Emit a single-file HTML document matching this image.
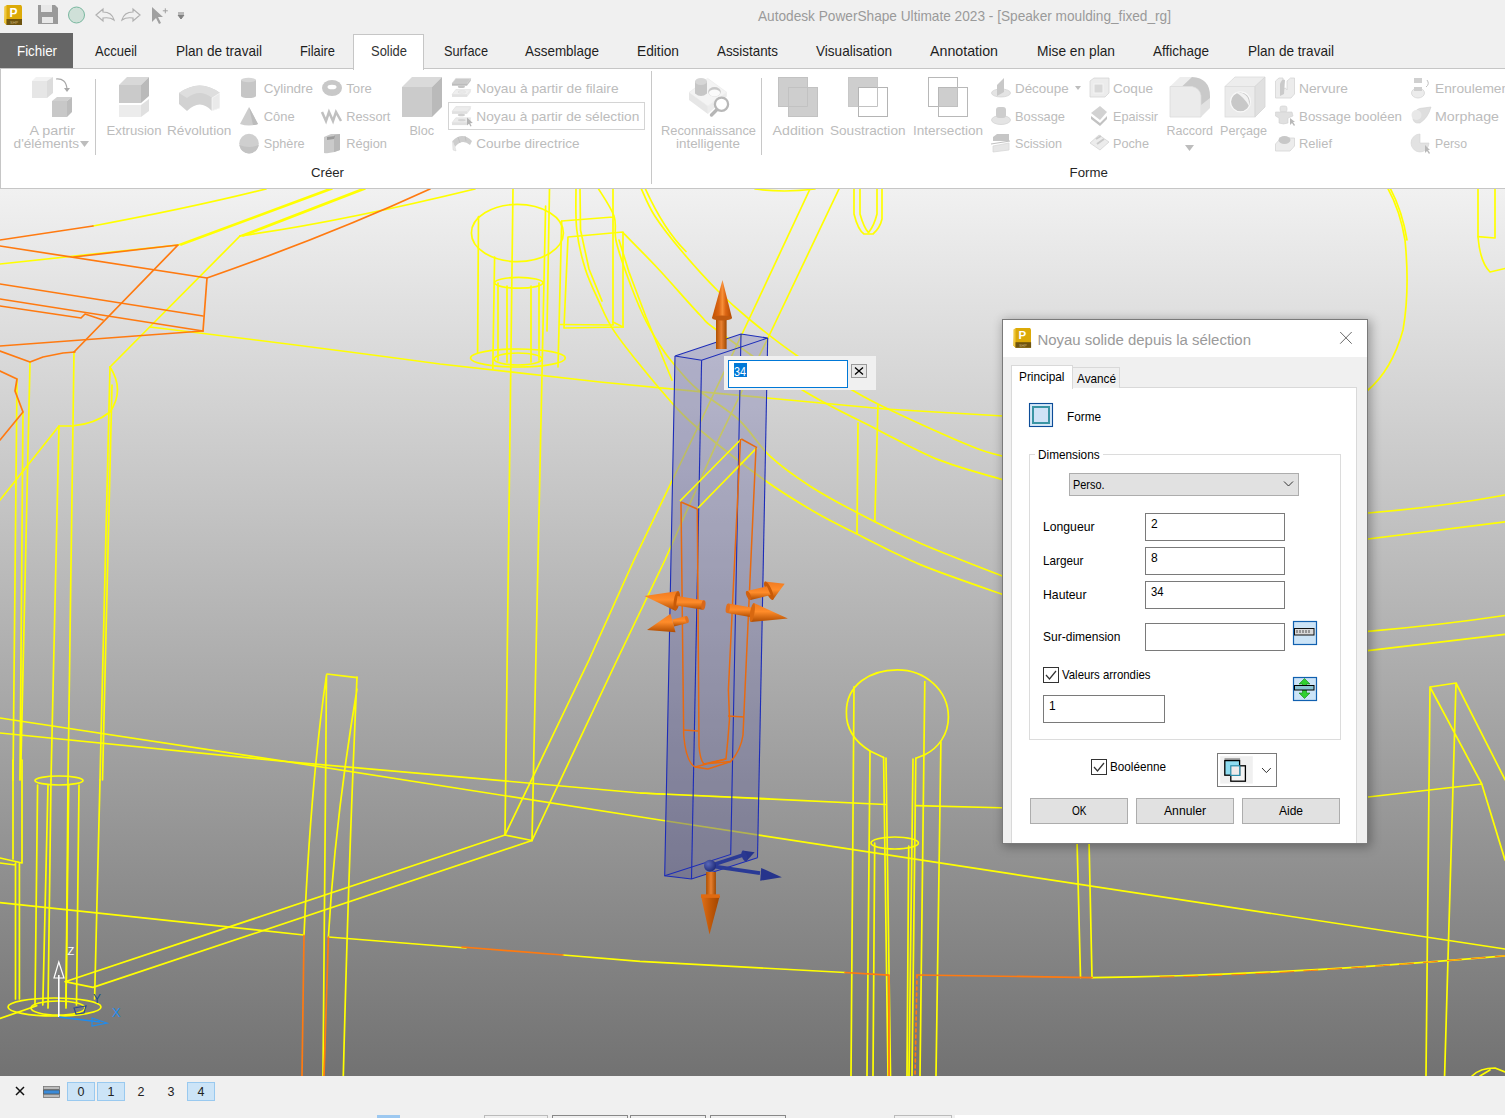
<!DOCTYPE html>
<html><head><meta charset="utf-8">
<style>
*{margin:0;padding:0;box-sizing:border-box}
html,body{width:1505px;height:1118px;overflow:hidden;background:#f0f0f0;font-family:"Liberation Sans",sans-serif;position:relative}
.a{position:absolute;white-space:nowrap}
svg text{font-family:"Liberation Sans",sans-serif}
</style></head><body>
<div class="a" style="left:0;top:33px;width:73px;height:35px;background:#666"></div>
<div class="a" style="left:0;top:68px;width:1510px;height:121px;background:#fff;border:1px solid #c6c6c6"></div>
<div class="a" style="left:353px;top:34px;width:71px;height:36px;background:#fff;border:1px solid #c6c6c6;border-bottom:none"></div>
<div class="a" style="left:0;top:189px;width:1505px;height:887px;background:linear-gradient(#f1f1f1,#727272)"></div>
<svg class="a" style="left:0;top:189px" width="1505" height="887" viewBox="0 189 1505 887">
<g fill="none" stroke-linejoin="round" stroke-linecap="round">
<!-- ===== yellow wireframe ===== -->
<defs><mask id="bm" maskUnits="userSpaceOnUse" x="0" y="189" width="1505" height="887"><rect x="0" y="189" width="1505" height="887" fill="#fff"/><path d="M675 356 L741 334 L767.7 338 L757.5 857.8 L691.5 879 L664.7 875.7 Z" fill="#9a9a9a"/></mask></defs>
<g stroke="#ffff00" stroke-width="1.7" mask="url(#bm)">
<!-- region 1 top-left -->
<path d="M93 226 Q190 208 266 189"/>
<path d="M0 264 L178 245"/>
<path d="M178 245 L329 189"/><path d="M181 245 L332 189"/>
<path d="M240 236 L362 189"/><path d="M243 236 L365 189"/>
<path d="M240 236 Q340 222 475 189"/>
<path d="M240 236 L110 367"/>
<path d="M150 327 Q300 345 440 364 L600 382 L699 391.6 L821 403 L885 409 L1003 416"/>
<path d="M30 362 L21 760"/><path d="M74 352 L68 780"/><path d="M110 367 L100 780"/><path d="M112 385 L102.5 780"/>
<path d="M110 367 Q125 390 110 412 Q95 424 72 426 L59 426 L0 500"/>
<path d="M59 426 L51 780"/>
<path d="M17 379 L13 780"/><path d="M23 412 L20 780"/>
<!-- cylinder near 517 -->
<ellipse cx="517.4" cy="233" rx="46" ry="28.6"/>
<path d="M478.5 216.6 L477.6 352.6"/>
<path d="M513 188 L505 835"/>
<path d="M545.6 206 L532 840.5"/>
<path d="M549.5 188 L547 331"/>
<path d="M494.6 257 L492.8 368.7"/>
<path d="M561.7 221 L558 367"/>
<ellipse cx="518.8" cy="282.8" rx="24.2" ry="5.4"/>
<path d="M498 283 V360 M507 286 V362 M531 286 V362 M539 283 V360"/>
<ellipse cx="517.9" cy="358" rx="47.4" ry="9"/>
<ellipse cx="518" cy="359" rx="24" ry="6"/>
<!-- boxes -->
<path d="M561.7 221 L613 217 M613 188 L613 325 L560 324.5"/>
<path d="M568 237 L623 232 L623 327 L564 328 L568 237"/>
<path d="M613 322 L623 327"/>
<path d="M576 188 C576.1 195.0 575.2 216.5 576.8 230 C578.3 243.5 581.6 257.1 585.3 269 C589.0 280.9 594.4 291.5 598.9 301.4 C603.4 311.3 606.0 318.4 612.5 328.6 C619.0 338.8 627.5 349.5 638 362.5 C648.5 375.5 665.1 395.4 675.4 406.7 C685.7 417.9 685.4 417.9 700 430 C714.6 442.1 744.2 465.5 763 479 C781.8 492.5 797.5 501.9 813 511 C828.5 520.1 838.0 524.6 855.9 533.5 C873.8 542.4 894.6 554.0 920.3 564.6 C946.0 575.2 995.0 591.6 1010 597"/>
<path d="M580 188 L580.5 230 L589 269 L602 301"/>
<path d="M619 240 L629 272 L646 317 L672 380"/>
<path d="M641 188 C643.2 192.6 647.7 204.9 654.5 215.5 C661.3 226.1 671.4 238.9 682 251.5 C692.6 264.1 706.8 279.8 718 291 C729.2 302.2 736.0 308.3 749 319 C762.0 329.7 778.9 343.2 796 355 C813.1 366.8 836.6 380.9 851.6 389.7 C866.6 398.5 866.0 398.5 886 408 C906.0 417.5 952.3 438.5 971.8 446.5 C991.3 454.5 997.8 454.6 1003 456.2"/>
<path d="M645 188 Q664 230 686 251.5"/>
<path d="M623 232.6 C628.9 238.7 645.6 255.3 658.4 269 C671.2 282.7 690.1 304.7 700 315 C709.9 325.3 701.0 318.6 718 331 C735.0 343.4 775.5 373.3 802 389.7 C828.5 406.1 854.4 417.8 877 429.4 C899.6 441.0 916.5 451.0 937.5 459.4 C958.5 467.8 992.1 476.4 1003 479.8"/>
<path d="M598 188 C600.7 192.7 611.0 207.3 614 216 C617.0 224.7 613.9 230.6 615.9 240 C617.9 249.4 621.5 260.0 626 272.5 C630.5 285.0 637.3 302.8 643 315 C648.7 327.2 654.6 337.0 660 345.5 C665.4 354.0 669.2 358.8 675.4 366 C681.6 373.2 686.5 380.1 697 389 C707.5 397.9 726.3 408.3 738.5 419.5 C750.7 430.7 758.3 445.2 770 456.2 C781.7 467.1 794.3 475.9 808.6 485.2 C822.9 494.5 837.3 502.3 855.9 512 C874.5 521.7 894.6 532.0 920.3 543.2 C946.0 554.4 995.0 573.0 1010 579"/>
<path d="M810 189 L743 332 L698 427 L670.5 484 L634 560 L589 660 L505 835"/>
<path d="M839 189 L768 338 L743 389 L715.4 446 L665 560 L617 660 L532 840.5"/>
<path d="M755 189 Q784 193 815 189"/>
<path d="M854 189 V214 Q858 230 864 234 L873 234 Q880 228 882 219 V189"/>
<path d="M860 189 V214 Q864 228 868.5 232.6 Q874 226 877 214 V189"/>
<path d="M858 423 L857 533.5"/><path d="M878 404.7 L874.8 521.7"/>
<!-- right top -->
<path d="M1387.6 188 Q1400 210 1405 240 Q1410 290 1403 330 Q1392 370 1367 391"/>
<path d="M1390 188 Q1402 210 1407 240"/>
<path d="M1478 188 L1478 236.7 Q1480 262 1490 272 L1505 268.5"/>
<path d="M1495 188 L1495 238 L1478 236.7"/>
<path d="M1368 513 Q1441 507 1505 495"/><path d="M1368 539 Q1441 530 1505 521.8"/>
<path d="M1368 631.4 Q1441 625 1505 615.5"/><path d="M1368 650.7 Q1441 642 1505 634.4"/>
<path d="M1430 687 L1456 683 M1430 687 L1426 1076 M1456 683 L1444.6 1076 M1430 687 L1481.8 784 L1505 860 M1456 683 L1505 779.6 M1368 797 L1481.8 784"/>
<!-- left mid / bottom -->
<path d="M0 733 L280 761 L640 793 L885.4 804.5 M915.8 805.7 L1010 808"/>
<path d="M0 718 L280 760.5 L660 820 L1010 873.7 L1505 949"/>
<path d="M327 674 L357 677.7"/>
<path d="M326.5 675 Q311 780 304 935.4 M326.5 675 L323 1076 M357 689 Q335 820 328.4 937 M357 677 Q349 850 343.3 1076"/>
<path d="M505 835 L532 840.5"/>
<path d="M505 835 L65 981.7 L93 987.4 L532 840.5"/>
<path d="M13 760 V859 M22 760 V863 M0 858 L22 863 M0 863 L15.5 865 M15.5 863 V999 M19.4 863 V999"/>
<path d="M51 780 L48 1008 M68 780 L66 1008 M100 780 L94.6 999"/>
<ellipse cx="59" cy="780.5" rx="24" ry="4.5"/>
<path d="M37.6 785 L35 1005 M48 785 L42.8 1005 M68.7 785 L66 1005 M79 785 L76.5 1005"/>
<ellipse cx="54.5" cy="1007" rx="46.5" ry="9"/>
<ellipse cx="58" cy="1008" rx="27" ry="7"/>
<path d="M0 1018.5 L36.7 1005.7"/>
<path d="M0 902.7 L303.7 935"/>
<path d="M328.4 937 L466 948 M563 955 L640 961.4 L845 972.5 M1092 977.6 Q1268 976 1505 955.8"/>
<!-- keyhole post -->
<path d="M883.6 757.4 L870 751 C852 740 846 725 846.4 711.8 C846.4 685 870 669.8 897.4 669.8 C925 669.8 948.4 690 948.4 717 C948.4 735 938 748 924.8 754.8 L915.8 758.3"/>
<path d="M854 686.8 L851 1076 M924.8 681.5 L920 1076 M870 751 L867 1076 M940.9 742 L936 1076"/>
<path d="M883.6 757.4 L888 1076 M886 758 L890.5 1076 M915.8 758.3 L912 1076 M913 759 L909 1076"/>
<ellipse cx="894.7" cy="843" rx="23.7" ry="6"/>
<path d="M874.7 843 L873 1076 M908.7 846 L907 1076"/>
<path d="M1077 840 L1080.5 977.6 M1089 840 L1092 977.6"/>
<path d="M1472 1076 Q1480 1068 1495 1068 L1505 1072 M1480 1076 L1490 1070"/>
</g>
<!-- ===== orange wireframe ===== -->
<g stroke="#ff7a10" stroke-width="1.7">
<path d="M0 240 L93 226"/>
<path d="M0 246 L207 278 Q330 235 430 189"/>
<path d="M74 257 L178 245 L74 352"/>
<path d="M207 278 L203 331"/>
<path d="M0 284 L203 316"/>
<path d="M0 299 L203 331"/>
<path d="M0 306 L81 318 L85 314 L103 320"/>
<path d="M0 346 L203 331"/>
<path d="M0 351 L30 362 L43 357 L63 353 L75 352"/>
<path d="M0 371 L17 379 L15 391 L23 412 L0 440"/>
<path d="M304 935.4 L302 1076 M328.4 937 L324 1076"/>
<path d="M462 947 L563 955"/>
<path d="M845 972.5 L889 975.2 L889 1076 M917 975 L1092 977.6"/>
<path d="M917 975 L915 1076" stroke-dasharray="3 3"/>
<path d="M1160 977 Q1268 976 1505 955.8" stroke-dasharray="14 10" stroke-width="1"/>
</g>
</g>

<defs>
<linearGradient id="cone" x1="0" y1="0" x2="1" y2="0">
<stop offset="0" stop-color="#c05000"/><stop offset="0.35" stop-color="#dc6614"/><stop offset="0.52" stop-color="#f89038"/><stop offset="0.68" stop-color="#dc6614"/><stop offset="1" stop-color="#b04800"/>
</linearGradient>
<linearGradient id="shaft" x1="0" y1="0" x2="1" y2="0">
<stop offset="0" stop-color="#b05000"/><stop offset="0.5" stop-color="#e88030"/><stop offset="1" stop-color="#a04800"/>
</linearGradient>
<linearGradient id="coneh" x1="0" y1="0" x2="0" y2="1">
<stop offset="0" stop-color="#f07a20"/><stop offset="0.45" stop-color="#ff8c2a"/><stop offset="1" stop-color="#b04c00"/>
</linearGradient>
<linearGradient id="coned" x1="0" y1="0" x2="1" y2="0">
<stop offset="0" stop-color="#e07018"/><stop offset="0.45" stop-color="#c45a08"/><stop offset="1" stop-color="#a04400"/>
</linearGradient>
<radialGradient id="ball" cx="0.35" cy="0.35" r="0.7">
<stop offset="0" stop-color="#5a68b8"/><stop offset="1" stop-color="#1e2a78"/>
</radialGradient>
</defs>
<!-- translucent box faces -->
<g fill="#3a3aa0" fill-opacity="0.22" stroke="none">
<path d="M675 356 L741 334 L767.7 338 L757.5 857.8 L691.5 879 L664.7 875.7 Z"/>
</g>
<g fill="#3a3a90" fill-opacity="0.05" stroke="none">
<path d="M675 356 L701.6 360.3 L691.5 879 L664.7 875.7 Z"/>
</g>
<path d="M640 793 L770 798.9" stroke="#ffff00" stroke-width="1.7" fill="none"/>
<g fill="none" stroke="#1c2cb8" stroke-width="1.1">
<path d="M675 356 L741 334 L767.7 338 L701.6 360.3 Z"/>
<path d="M675 356 L664.7 875.7 L691.5 879 L757.5 857.8"/>
<path d="M701.6 360.3 L691.5 879"/>
<path d="M741 334 L730.7 854.4 L664.7 875.7"/>
<path d="M767.7 338 L757.5 857.8"/>
</g>
<path d="M680 501 L741.3 439 M698 508 L757 447.7" stroke="#ffff00" stroke-width="1.7" fill="none"/>
<!-- orange U inside -->
<g fill="none" stroke="#e86a10" stroke-width="1.5">
<path d="M681 502 L683.7 735 Q686 762 695 767 L708 769 L730.7 761.6 Q741 750 743 735 L745 690 L756 447.7"/>
<path d="M697.3 509 L699 746 Q700 760 704 764 L726 759 Q728 740 729.5 719 L728.4 690 L740.5 439"/>
<path d="M681 502 L697.3 509 M741.3 439 L757 447.7"/>
<path d="M683.7 730 L698 731 M728 716 L744 717"/>
<path d="M695 767 L726 759 M704 764 L730.7 761.6"/>
</g>
<!-- up arrow -->
<rect x="716" y="318" width="10.6" height="31" fill="url(#shaft)"/>
<path d="M722.5 280 L732 318 L712 318 Z" fill="url(#cone)"/>
<ellipse cx="722" cy="318" rx="10" ry="2.5" fill="#c05a10"/>
<!-- down arrow -->
<rect x="706.1" y="872" width="9.8" height="24.5" fill="url(#shaft)"/>
<path d="M701 896 L719.7 896 L709.5 934.6 Z" fill="url(#coned)"/>
<rect x="701" y="894.3" width="18.7" height="3.6" fill="#e06a10"/>
<!-- left arrows -->
<g>
<path d="M644.4 596 L678.3 590.9 L675.3 610.7 Z" fill="url(#coneh)"/>
<ellipse cx="676.8" cy="600.8" rx="3" ry="10" transform="rotate(8.5 676.8 600.8)" fill="#c85a08"/>
<path d="M677.5 596.1 L704.1 600.4 L702.7 609.8 L676.1 605.5 Z" fill="url(#coneh)"/>
<ellipse cx="703.4" cy="605.1" rx="2" ry="4.8" transform="rotate(8.5 703.4 605.1)" fill="#d8681a"/>
<path d="M672.1 619.6 L686.1 616.1 L687.9 622.9 L673.9 626.4 Z" fill="url(#coneh)"/>
<ellipse cx="687" cy="619.5" rx="1.6" ry="3.5" transform="rotate(-15 687 619.5)" fill="#e07020"/>
<path d="M647 630 L670.5 613.8 L675.5 632.2 Z" fill="url(#coneh)"/>
</g>
<!-- right arrows -->
<g>
<path d="M728.6 603.6 L753.1 607.8 L751.5 617.2 L727 613 Z" fill="url(#coneh)"/>
<ellipse cx="727.8" cy="608.3" rx="2" ry="4.8" transform="rotate(9.4 727.8 608.3)" fill="#e07020"/>
<path d="M787.9 618.4 L753.9 603 L750.7 622 Z" fill="url(#coneh)"/>
<ellipse cx="752.3" cy="612.5" rx="2.2" ry="9.6" transform="rotate(9.4 752.3 612.5)" fill="#d86810"/>
<path d="M784.7 583.8 L764.8 581.5 L772.8 599.9 Z" fill="url(#coneh)"/>
<ellipse cx="768.8" cy="590.7" rx="3" ry="10" transform="rotate(-23.4 768.8 590.7)" fill="#c85a08"/>
<path d="M766.9 586.3 L746.7 591.1 L750.5 599.9 L770.7 595.1 Z" fill="url(#coneh)"/>
<ellipse cx="748.6" cy="595.5" rx="2" ry="4.8" transform="rotate(-23.4 748.6 595.5)" fill="#d06010"/>
</g>
<!-- blue triad -->
<path d="M710 865.8 L760 873.2" stroke="#2a3a96" stroke-width="3.8"/>
<path d="M761.2 867.9 L781.8 877.3 L760.2 880.7 Z" fill="#26348c"/>
<path d="M710 865.8 L743 855" stroke="#2a3a96" stroke-width="3.6"/>
<path d="M742.5 850.5 L754.6 852.2 L746.2 861.5 Z" fill="#26348c"/>
<ellipse cx="744.4" cy="856" rx="2.6" ry="5.5" transform="rotate(-18 744.4 856)" fill="#2a3890"/>
<circle cx="710" cy="865.8" r="6" fill="url(#ball)"/>
<!-- axis triad bottom-left -->
<path d="M58.8 1017 V975" stroke="#fff" stroke-width="1.6"/>
<path d="M58.8 962 L54 978 L64 978 Z" fill="none" stroke="#fff" stroke-width="1.2"/>
<text x="67.5" y="955" font-family="Liberation Sans" font-size="11" fill="#fff">Z</text>
<path d="M59 1017 L100 1022" stroke="#1e8cf0" stroke-width="1.6"/>
<path d="M92 1018 L107 1023 L92 1026 Z" fill="none" stroke="#1e8cf0" stroke-width="1.2"/>
<text x="112" y="1017" font-family="Liberation Sans" font-size="13" fill="#1e8cf0">X</text>
<text x="93" y="1003" font-family="Liberation Sans" font-size="12" fill="#1a4e8c">Y</text>
<path d="M74 1008 L86 1006 L84 1013 L76 1014 Z" fill="none" stroke="#2a4a90" stroke-width="1.2"/>

</svg>
<!-- quick access toolbar -->
<svg class="a" style="left:0;top:0" width="200" height="33">
<path d="M5.5 6 L7 5 L21 5 L22 6.5 L22 25 L6.5 25 L4.2 22.5 Z" fill="#dcaa08"/>
<path d="M4.2 6.5 L6.5 5.5 L6.5 25 L4.2 22.5 Z" fill="#f0c840"/>
<rect x="6.5" y="19" width="15.5" height="6" fill="#6e5410"/>
<text x="9.6" y="16.5" font-family="Liberation Sans" font-weight="bold" font-size="12" fill="#fff">P</text>
<text x="10" y="23.8" font-family="Liberation Sans" font-size="4" fill="#c8b070">SHP</text>
<path d="M38 5 H55 L58 8 V24 H38 Z" fill="#9a9a9a"/>
<rect x="41" y="5" width="11" height="7" fill="#e8e8e8"/>
<rect x="42" y="17" width="11" height="6" fill="#e8e8e8"/>
<circle cx="76.5" cy="15" r="8" fill="#cfe0d8" stroke="#7ab8a0" stroke-width="1"/>
<path d="M96 15 L103 9 V12 Q112 12 114 20 Q110 17 103 18 V21 Z" fill="none" stroke="#b0b0b0" stroke-width="1.2"/>
<path d="M140 15 L133 9 V12 Q124 12 122 20 Q126 17 133 18 V21 Z" fill="none" stroke="#b0b0b0" stroke-width="1.2"/>
<path d="M152 7 L152 22 L156 18 L159 24 L161 23 L158 17 L163 17 Z" fill="#a0a0a0"/>
<path d="M162.8 10.8 H167.8 M165.3 8.3 V13.3" stroke="#a0a0a0" stroke-width="1"/>
<path d="M178 13 H184 M178 15 L181 19 L184 15 Z" stroke="#808080" fill="#808080" stroke-width="1"/>
</svg>

<svg class="a" style="left:0;top:0" width="1505" height="189">
<g stroke="none">
<!-- separators -->
<rect x="95" y="79" width="1" height="76" fill="#c8c8c8"/>
<rect x="651" y="71" width="1" height="113" fill="#c8c8c8"/>
<rect x="761" y="78" width="1" height="77" fill="#c8c8c8"/>
<!-- A partir -->
<path d="M32 81 L36 77 L53 77 L49 81 Z" fill="#f2f2f2"/>
<rect x="32" y="81" width="15" height="17" fill="#e6e6e6"/>
<path d="M47 81 L53 77 L53 93 L47 98 Z" fill="#dcdcdc"/>
<path d="M56 79 Q66 78 67 89" fill="none" stroke="#a8a8a8" stroke-width="1.2"/>
<path d="M64 88 L70 88 L67 92 Z" fill="#a8a8a8"/>
<path d="M52 101 L57 97 L72 97 L67 101 Z" fill="#d0d0d0"/>
<rect x="52" y="101" width="15" height="16" fill="#c8c8c8"/>
<path d="M67 101 L72 97 L72 112 L67 117 Z" fill="#bcbcbc"/>
<path d="M80 141 L89 141 L84.5 147 Z" fill="#bdbdbd"/>
<!-- Extrusion -->
<path d="M119 85 L127 77 L149 77 L141 85 Z" fill="#d8d8d8"/>
<rect x="119" y="85" width="22" height="18" fill="#cacaca"/>
<path d="M141 85 L149 77 L149 96 L141 103 Z" fill="#bababa"/>
<rect x="119" y="105" width="22" height="12" fill="#ececec"/>
<path d="M141 105 L149 99 L149 111 L141 117 Z" fill="#e0e0e0"/>
<!-- Revolution -->
<path d="M179 93 Q200 78 220 93 L220 108 L212 111 Q200 98 187 111 L179 104 Z" fill="#d2d2d2"/>
<path d="M179 93 Q200 78 220 93 L212 98 Q200 88 187 98 Z" fill="#dedede"/>
<path d="M212 98 L220 93 L220 108 L212 111 Z" fill="#eaeaea" stroke="#fff" stroke-width="0.6"/>
<!-- cylinder cone sphere -->
<rect x="241" y="80" width="15" height="16" fill="#c6c6c6"/>
<ellipse cx="248.5" cy="80" rx="7.5" ry="2.2" fill="#d6d6d6"/>
<ellipse cx="248.5" cy="96" rx="7.5" ry="2" fill="#c6c6c6"/>
<path d="M249 107 L240 124 Q249 127 258 124 Z" fill="#cdcdcd"/>
<path d="M249 107 L253 125 Q256 125 258 124 Z" fill="#bcbcbc"/>
<circle cx="249" cy="143.6" r="9.8" fill="#cfcfcf"/>
<path d="M239.3 145 Q249 149 258.8 145 Q257 153 249 153.5 Q241 153 239.3 145 Z" fill="#c3c3c3"/>
<!-- torus spring region -->
<ellipse cx="332" cy="88" rx="10" ry="8" fill="#c8c8c8"/>
<ellipse cx="332" cy="87" rx="4.5" ry="2.3" fill="#fff"/>
<path d="M322 112 L326 121 L329 112 L333 121 L336 112 L341 121" fill="none" stroke="#c0c0c0" stroke-width="2.5"/>
<path d="M324 137 L331 134 L340 134 L340 150 Q332 154 324 153 Z" fill="#cacaca"/>
<path d="M334 135 L340 134 L340 150 L334 152 Z" fill="#b8b8b8"/>
<path d="M327 137 L335 136 L334 139 L327 140 Z" fill="#9a9a9a"/>
<!-- Bloc -->
<path d="M402 87 L412 77 L442 77 L432 87 Z" fill="#dadada"/>
<rect x="402" y="87" width="30" height="30" fill="#cbcbcb"/>
<path d="M432 87 L442 77 L442 107 L432 117 Z" fill="#bababa"/>
<!-- noyau icons -->
<path d="M452 83.3 L455.8 78.39999999999999 L470.8 78.39999999999999 L467 83.3 Z" fill="#cacaca" stroke="#d8d8d8" stroke-width="0.5"/>
<rect x="452" y="83.3" width="15" height="2.4" fill="#bcbcbc"/>
<path d="M467 83.3 L470.8 78.39999999999999 L470.8 80.8 L467 85.7 Z" fill="#c4c4c4"/>
<ellipse cx="461.4" cy="86.8" rx="3.6" ry="1.3" fill="#c4c4c4"/>
<path d="M452 94.5 L455.8 89.6 L470.8 89.6 L467 94.5 Z" fill="#efefef" stroke="#d8d8d8" stroke-width="0.5"/>
<rect x="452" y="94.5" width="15" height="2.4" fill="#e2e2e2"/>
<path d="M467 94.5 L470.8 89.6 L470.8 92.0 L467 96.9 Z" fill="#e8e8e8"/>
<ellipse cx="461.8" cy="92" rx="3.8" ry="1.1" fill="none" stroke="#d8d8d8" stroke-width="0.6"/>
<path d="M452 111.5 L455.8 106.6 L470.8 106.6 L467 111.5 Z" fill="#ececec" stroke="#d8d8d8" stroke-width="0.5"/>
<rect x="452" y="111.5" width="15" height="2.4" fill="#e0e0e0"/>
<path d="M467 111.5 L470.8 106.6 L470.8 109.0 L467 113.9 Z" fill="#e6e6e6"/>
<ellipse cx="461.4" cy="115" rx="3.6" ry="1.3" fill="#d0d0d0"/>
<path d="M452 122.7 L455.8 117.8 L470.8 117.8 L467 122.7 Z" fill="#ebebeb" stroke="#d8d8d8" stroke-width="0.5"/>
<rect x="452" y="122.7" width="15" height="2.4" fill="#e0e0e0"/>
<path d="M467 122.7 L470.8 117.8 L470.8 120.2 L467 125.10000000000001 Z" fill="#e6e6e6"/>
<ellipse cx="461.8" cy="120.2" rx="3.8" ry="1.1" fill="#d4d4d4"/>
<path d="M467 117.5 L467 125.5 L469 123.8 L470.5 126.5 L471.6 126 L470.2 123.2 L472.8 123 Z" fill="#b4b4b4"/>
<rect x="448.5" y="102.5" width="196" height="27" fill="none" stroke="#d4d4d4" stroke-width="1"/>
<path d="M452.5 141 Q462 131 472 141 L470 145 Q462 138 455 147 Z" fill="#cdcdcd"/>
<path d="M452.5 141 L455 147 L456 151 L453 150 Z" fill="#e8e8e8" stroke="#d6d6d6" stroke-width="0.5"/>
<path d="M458 137 L460 143 M465 136 L466 141" stroke="#bcbcbc" stroke-width="0.7"/>
<!-- Reconnaissance -->
<path d="M689 92.6 L707.6 78.3 L726.8 92.3 L707.9 106.2 Z" fill="#f4f4f4" stroke="#e6e6e6" stroke-width="0.5"/>
<path d="M689 92.6 L707.9 106.2 L707.9 113.9 L689 99.9 Z" fill="#e6e6e6"/>
<path d="M707.9 106.2 L726.8 92.3 L726.8 96.6 L707.9 113.9 Z" fill="#ececec"/>
<path d="M695 81 V93.5 Q701 98.5 707 93.5 V81 Z" fill="#c6c6c6"/>
<ellipse cx="701" cy="81.5" rx="6" ry="3.5" fill="#d6d6d6"/>
<ellipse cx="714.5" cy="91.8" rx="6.3" ry="4.8" fill="#c8c8c8"/>
<ellipse cx="714.5" cy="93" rx="5.6" ry="3.4" fill="#fafafa"/>
<path d="M711.5 115 L717.5 109" stroke="#b6b6b6" stroke-width="3.4" stroke-linecap="round"/>
<circle cx="721.5" cy="104.2" r="6.6" fill="#fff" stroke="#b8b8b8" stroke-width="2.3"/>
<!-- Addition Soustraction Intersection -->
<rect x="778.5" y="77.5" width="29" height="29" fill="#cecece" stroke="#c2c2c2" stroke-width="1"/>
<rect x="788.5" y="87.5" width="29" height="29" fill="#cecece" stroke="#c2c2c2" stroke-width="1"/>
<path d="M788.5 106.5 H807.5 V87.5" fill="none" stroke="#c2c2c2" stroke-width="1"/>
<rect x="848.5" y="77.5" width="29" height="29" fill="#cecece" stroke="#c8c8c8" stroke-width="1"/>
<rect x="858.5" y="87.5" width="29" height="29" fill="#fff" stroke="#b4b4b4" stroke-width="1"/>
<path d="M858.5 106.5 H877.5 V87.5" fill="none" stroke="#c2c2c2" stroke-width="1"/>
<rect x="928.5" y="77.5" width="29" height="29" fill="none" stroke="#b8b8b8" stroke-width="1"/>
<rect x="938.5" y="87.5" width="19" height="19" fill="#cecece"/>
<rect x="938.5" y="87.5" width="29" height="29" fill="none" stroke="#b8b8b8" stroke-width="1"/>
<path d="M938.5 106.5 H957.5 V87.5" fill="none" stroke="#c0c0c0" stroke-width="1"/>
<!-- small forme icons -->
<ellipse cx="1001" cy="93" rx="9.5" ry="4" fill="#e4e4e4" stroke="#d4d4d4" stroke-width="0.8"/>
<path d="M997 85 L1004 78 L1004 92 L997 96 Z" fill="#c8c8c8"/>
<path d="M1075 86 L1081 86 L1078 90 Z" fill="#bdbdbd"/>
<ellipse cx="1001" cy="120" rx="9.5" ry="4.5" fill="#e4e4e4" stroke="#d4d4d4" stroke-width="0.8"/>
<rect x="996" y="107" width="10" height="11" rx="3" fill="#cdcdcd"/>
<path d="M993 137 L997 134 L1009 134 L1009 141 L993 141 Z" fill="#c6c6c6"/>
<path d="M991 144 L1010 141" stroke="#c0c0c0" stroke-width="1"/>
<path d="M993 146 L1009 143 L1009 150 L993 152 Z" fill="#e6e6e6" stroke="#d8d8d8" stroke-width="0.8"/>
<path d="M1090 81 L1094 78 L1109 78 L1109 93 L1105 97 L1090 97 Z" fill="#ececec" stroke="#d6d6d6" stroke-width="0.8"/>
<rect x="1094" y="84" width="9" height="9" fill="#d8d8d8" stroke="#f4f4f4" stroke-width="1"/>
<path d="M1091 113 L1100 106 L1107 112 L1100 120 Z" fill="#d2d2d2"/>
<path d="M1091 116 L1100 123 L1107 116 L1107 119 L1100 126 L1091 119 Z" fill="#c2c2c2"/>
<path d="M1090 143 L1099 135 L1109 142 L1100 150 Z" fill="#ececec" stroke="#d4d4d4" stroke-width="0.8"/>
<path d="M1096 139 L1101 136 M1097 144 L1104 139" stroke="#cacaca" stroke-width="2"/>
<!-- Raccord Percage -->
<path d="M1170 86.5 L1180 77 L1192 77 L1201 86.5 Z" fill="#ededed"/>
<path d="M1192 77 Q1210 78 1210 96 L1210 105 L1201 113 L1201 96 Q1199 88 1192 86.5 L1182 86.5 Z" fill="#c9c9c9"/>
<path d="M1170 86.5 L1192 86.5 Q1200 88 1201 96 L1201 117 L1170 117 Z" fill="#ebebeb" stroke="#dadada" stroke-width="0.8"/>
<path d="M1201 105 L1210 98 L1210 108 L1201 117 Z" fill="#e2e2e2"/>
<path d="M1185 145 L1194 145 L1189.5 151 Z" fill="#bdbdbd"/>
<path d="M1225 86.5 L1235 77 L1265 77 L1255 86.5 Z" fill="#ededed" stroke="#dcdcdc" stroke-width="0.8"/>
<rect x="1225" y="86.5" width="30" height="30.5" fill="#ebebeb" stroke="#dcdcdc" stroke-width="0.8"/>
<path d="M1255 86.5 L1265 77 L1265 107 L1255 117 Z" fill="#e0e0e0" stroke="#d6d6d6" stroke-width="0.8"/>
<circle cx="1240.5" cy="101.8" r="10" fill="#c8c8c8" stroke="#f8f8f8" stroke-width="1.2"/>
<path d="M1236 92.5 Q1250 92 1249 106 Q1244 97 1236 92.5 Z" fill="#f2f2f2"/>
<!-- Nervure etc -->
<path d="M1275.5 81 L1279 78 L1283 78 L1283 90 Q1285 86 1287 90 L1287 81 L1290.5 78 L1294.5 78 L1294.5 94 L1291 98 L1275.5 98 Z" fill="#ececec" stroke="#d6d6d6" stroke-width="0.8"/>
<path d="M1280 96 L1280 84 Q1282 78 1285 80 L1284 94 Z" fill="#cacaca"/>
<rect x="1280" y="106" width="7" height="6" rx="2" fill="#e4e4e4" stroke="#d2d2d2" stroke-width="0.6"/>
<path d="M1275.5 112 L1292 112 L1293 116 L1288 118 L1288 123 Q1283.5 125 1279 123 L1279 118 L1275.5 116 Z" fill="#e0e0e0" stroke="#d0d0d0" stroke-width="0.6"/>
<path d="M1290 118 L1290 125 L1292 123 L1294 126 L1295 125 L1293 122 L1295 122 Z" fill="#b8b8b8"/>
<path d="M1275.5 144 L1281 138 L1294.5 138 L1294.5 146 L1290 151 L1275.5 151 Z" fill="#ececec" stroke="#d6d6d6" stroke-width="0.8"/>
<ellipse cx="1284.5" cy="140" rx="6" ry="4" fill="#c8c8c8"/>
<rect x="1414" y="78" width="8" height="5" fill="#d0d0d0"/>
<ellipse cx="1418" cy="93" rx="6.5" ry="5" fill="#ececec" stroke="#d6d6d6" stroke-width="0.8"/>
<rect x="1414" y="87" width="8" height="4" fill="#cfcfcf"/>
<path d="M1427 80 Q1430 84 1426 87" fill="none" stroke="#c0c0c0" stroke-width="1"/>
<path d="M1413 116 Q1415 108 1423 108 L1431 107 Q1428 118 1420 123 Q1412 124 1413 116 Z" fill="#dedede" stroke="#d0d0d0" stroke-width="0.6"/>
<circle cx="1416.5" cy="115" r="5" fill="#e8e8e8"/>
<path d="M1420 134 A9 9 0 1 0 1429 143 L1420 143 Z" fill="#e2e2e2" stroke="#d4d4d4" stroke-width="0.6"/>
<path d="M1425 145 L1425 153 L1427 151 L1429 154 L1430 153 L1428 150 L1430 150 Z" fill="#b8b8b8"/>
</g>

<text x="758" y="21" font-size="14.2" fill="#9a9a9a" font-weight="normal" textLength="413" lengthAdjust="spacingAndGlyphs">Autodesk PowerShape Ultimate 2023 - [Speaker moulding_fixed_rg]</text>
<text x="17" y="56" font-size="14.2" fill="#ffffff" font-weight="normal" textLength="40" lengthAdjust="spacingAndGlyphs">Fichier</text>
<text x="95" y="56" font-size="14.2" fill="#1e1e1e" font-weight="normal" textLength="42" lengthAdjust="spacingAndGlyphs">Accueil</text>
<text x="176" y="56" font-size="14.2" fill="#1e1e1e" font-weight="normal" textLength="86" lengthAdjust="spacingAndGlyphs">Plan de travail</text>
<text x="300" y="56" font-size="14.2" fill="#1e1e1e" font-weight="normal" textLength="35" lengthAdjust="spacingAndGlyphs">Filaire</text>
<text x="371" y="56" font-size="14.2" fill="#333" font-weight="normal" textLength="36" lengthAdjust="spacingAndGlyphs">Solide</text>
<text x="444" y="56" font-size="14.2" fill="#1e1e1e" font-weight="normal" textLength="44" lengthAdjust="spacingAndGlyphs">Surface</text>
<text x="525" y="56" font-size="14.2" fill="#1e1e1e" font-weight="normal" textLength="74" lengthAdjust="spacingAndGlyphs">Assemblage</text>
<text x="637" y="56" font-size="14.2" fill="#1e1e1e" font-weight="normal" textLength="42" lengthAdjust="spacingAndGlyphs">Edition</text>
<text x="717" y="56" font-size="14.2" fill="#1e1e1e" font-weight="normal" textLength="61" lengthAdjust="spacingAndGlyphs">Assistants</text>
<text x="816" y="56" font-size="14.2" fill="#1e1e1e" font-weight="normal" textLength="76" lengthAdjust="spacingAndGlyphs">Visualisation</text>
<text x="930" y="56" font-size="14.2" fill="#1e1e1e" font-weight="normal" textLength="68" lengthAdjust="spacingAndGlyphs">Annotation</text>
<text x="1037" y="56" font-size="14.2" fill="#1e1e1e" font-weight="normal" textLength="78" lengthAdjust="spacingAndGlyphs">Mise en plan</text>
<text x="1153" y="56" font-size="14.2" fill="#1e1e1e" font-weight="normal" textLength="56" lengthAdjust="spacingAndGlyphs">Affichage</text>
<text x="1248" y="56" font-size="14.2" fill="#1e1e1e" font-weight="normal" textLength="86" lengthAdjust="spacingAndGlyphs">Plan de travail</text>
<text x="29.5" y="134.6" font-size="13" fill="#bcbcbc" font-weight="normal" textLength="45.5" lengthAdjust="spacingAndGlyphs">A partir</text>
<text x="13.6" y="148.1" font-size="13" fill="#bcbcbc" font-weight="normal" textLength="65.4" lengthAdjust="spacingAndGlyphs">d'éléments</text>
<text x="106.5" y="134.6" font-size="13" fill="#bcbcbc" font-weight="normal" textLength="55" lengthAdjust="spacingAndGlyphs">Extrusion</text>
<text x="167" y="134.6" font-size="13" fill="#bcbcbc" font-weight="normal" textLength="64.3" lengthAdjust="spacingAndGlyphs">Révolution</text>
<text x="263.7" y="92.7" font-size="13" fill="#bcbcbc" font-weight="normal" textLength="49.4" lengthAdjust="spacingAndGlyphs">Cylindre</text>
<text x="263.7" y="120.7" font-size="13" fill="#bcbcbc" font-weight="normal" textLength="31" lengthAdjust="spacingAndGlyphs">Cône</text>
<text x="263.7" y="148.4" font-size="13" fill="#bcbcbc" font-weight="normal" textLength="41" lengthAdjust="spacingAndGlyphs">Sphère</text>
<text x="346.3" y="92.7" font-size="13" fill="#bcbcbc" font-weight="normal" textLength="25.5" lengthAdjust="spacingAndGlyphs">Tore</text>
<text x="346.3" y="120.7" font-size="13" fill="#bcbcbc" font-weight="normal" textLength="44" lengthAdjust="spacingAndGlyphs">Ressort</text>
<text x="346.3" y="148.4" font-size="13" fill="#bcbcbc" font-weight="normal" textLength="40.7" lengthAdjust="spacingAndGlyphs">Région</text>
<text x="409.4" y="134.8" font-size="13" fill="#bcbcbc" font-weight="normal" textLength="24.6" lengthAdjust="spacingAndGlyphs">Bloc</text>
<text x="476.3" y="92.9" font-size="13" fill="#bcbcbc" font-weight="normal" textLength="142.3" lengthAdjust="spacingAndGlyphs">Noyau à partir de filaire</text>
<text x="476.3" y="120.5" font-size="13" fill="#bcbcbc" font-weight="normal" textLength="163" lengthAdjust="spacingAndGlyphs">Noyau à partir de sélection</text>
<text x="476.3" y="148.3" font-size="13" fill="#bcbcbc" font-weight="normal" textLength="103.2" lengthAdjust="spacingAndGlyphs">Courbe directrice</text>
<text x="661" y="134.6" font-size="13" fill="#bcbcbc" font-weight="normal" textLength="95" lengthAdjust="spacingAndGlyphs">Reconnaissance</text>
<text x="676" y="148.2" font-size="13" fill="#bcbcbc" font-weight="normal" textLength="64" lengthAdjust="spacingAndGlyphs">intelligente</text>
<text x="772.6" y="134.6" font-size="13" fill="#bcbcbc" font-weight="normal" textLength="51.2" lengthAdjust="spacingAndGlyphs">Addition</text>
<text x="830" y="134.6" font-size="13" fill="#bcbcbc" font-weight="normal" textLength="75.5" lengthAdjust="spacingAndGlyphs">Soustraction</text>
<text x="913" y="134.6" font-size="13" fill="#bcbcbc" font-weight="normal" textLength="70" lengthAdjust="spacingAndGlyphs">Intersection</text>
<text x="1015" y="92.7" font-size="13" fill="#bcbcbc" font-weight="normal" textLength="53.6" lengthAdjust="spacingAndGlyphs">Découpe</text>
<text x="1015" y="120.7" font-size="13" fill="#bcbcbc" font-weight="normal" textLength="50" lengthAdjust="spacingAndGlyphs">Bossage</text>
<text x="1015" y="148.4" font-size="13" fill="#bcbcbc" font-weight="normal" textLength="47" lengthAdjust="spacingAndGlyphs">Scission</text>
<text x="1113" y="92.7" font-size="13" fill="#bcbcbc" font-weight="normal" textLength="40" lengthAdjust="spacingAndGlyphs">Coque</text>
<text x="1113" y="120.7" font-size="13" fill="#bcbcbc" font-weight="normal" textLength="45" lengthAdjust="spacingAndGlyphs">Epaissir</text>
<text x="1113" y="148.4" font-size="13" fill="#bcbcbc" font-weight="normal" textLength="36" lengthAdjust="spacingAndGlyphs">Poche</text>
<text x="1166.5" y="134.6" font-size="13" fill="#bcbcbc" font-weight="normal" textLength="46.5" lengthAdjust="spacingAndGlyphs">Raccord</text>
<text x="1220" y="134.6" font-size="13" fill="#bcbcbc" font-weight="normal" textLength="47" lengthAdjust="spacingAndGlyphs">Perçage</text>
<text x="1299" y="92.7" font-size="13" fill="#bcbcbc" font-weight="normal" textLength="49" lengthAdjust="spacingAndGlyphs">Nervure</text>
<text x="1299" y="120.7" font-size="13" fill="#bcbcbc" font-weight="normal" textLength="103" lengthAdjust="spacingAndGlyphs">Bossage booléen</text>
<text x="1299" y="148.4" font-size="13" fill="#bcbcbc" font-weight="normal" textLength="33" lengthAdjust="spacingAndGlyphs">Relief</text>
<text x="1435" y="92.7" font-size="13" fill="#bcbcbc" font-weight="normal" textLength="78" lengthAdjust="spacingAndGlyphs">Enroulement</text>
<text x="1435" y="120.7" font-size="13" fill="#bcbcbc" font-weight="normal" textLength="64" lengthAdjust="spacingAndGlyphs">Morphage</text>
<text x="1435" y="148.4" font-size="13" fill="#bcbcbc" font-weight="normal" textLength="32" lengthAdjust="spacingAndGlyphs">Perso</text>
<text x="311" y="176.5" font-size="13" fill="#262626" font-weight="normal" textLength="33" lengthAdjust="spacingAndGlyphs">Créer</text>
<text x="1069.6" y="176.5" font-size="13" fill="#262626" font-weight="normal" textLength="38.2" lengthAdjust="spacingAndGlyphs">Forme</text>
</svg>
<!-- dimension input -->
<div class="a" style="left:724px;top:356px;width:152px;height:34px;background:#f0f0f0"></div>
<div class="a" style="left:728px;top:360px;width:120px;height:28px;background:#fff;border:1px solid #0078d7"></div>
<div class="a" style="left:734px;top:363px;width:12.5px;height:14px;background:#0078d7"></div>
<svg class="a" style="left:724px;top:356px" width="152" height="34">
<text x="10" y="19.5" font-size="13" fill="#fff" textLength="12" lengthAdjust="spacingAndGlyphs">34</text>
<rect x="127.5" y="8.5" width="15" height="13" fill="#e8e8e8" stroke="#9a9a9a" stroke-width="1"/>
<path d="M131 11.5 L139 18.5 M139 11.5 L131 18.5" stroke="#000" stroke-width="1.3"/>
</svg>
<!-- dialog shadow -->
<div class="a" style="left:1003px;top:320px;width:364px;height:523px;box-shadow:2px 2px 10px 2px rgba(0,0,0,0.3)"></div>
<div class="a" style="left:1002px;top:319px;width:366px;height:525px;background:#f0f0f0;border:1px solid #7a7a7a"></div>
<div class="a" style="left:1003px;top:320px;width:364px;height:37px;background:#fff"></div>
<div class="a" style="left:1011px;top:387px;width:346px;height:456px;background:#fff;border:1px solid #d9d9d9;border-bottom:none"></div>
<div class="a" style="left:1072px;top:367px;width:48px;height:21px;background:#f0f0f0;border:1px solid #d9d9d9;border-bottom:none"></div>
<div class="a" style="left:1011px;top:365px;width:62px;height:24px;background:#fff;border:1px solid #d9d9d9;border-bottom:none"></div>
<div class="a" style="left:1029px;top:454px;width:312px;height:286px;border:1px solid #dcdcdc"></div>
<div class="a" style="left:1069px;top:473px;width:230px;height:23px;background:#e1e1e1;border:1px solid #adadad"></div>
<div class="a" style="left:1145px;top:513px;width:140px;height:28px;background:#fff;border:1px solid #7a7a7a"></div>
<div class="a" style="left:1145px;top:547px;width:140px;height:28px;background:#fff;border:1px solid #7a7a7a"></div>
<div class="a" style="left:1145px;top:581px;width:140px;height:28px;background:#fff;border:1px solid #7a7a7a"></div>
<div class="a" style="left:1145px;top:623px;width:140px;height:28px;background:#fff;border:1px solid #7a7a7a"></div>
<div class="a" style="left:1043px;top:695px;width:122px;height:28px;background:#fff;border:1px solid #7a7a7a"></div>
<div class="a" style="left:1030px;top:798px;width:98px;height:26px;background:#e1e1e1;border:1px solid #adadad"></div>
<div class="a" style="left:1136px;top:798px;width:98px;height:26px;background:#e1e1e1;border:1px solid #adadad"></div>
<div class="a" style="left:1242px;top:798px;width:98px;height:26px;background:#e1e1e1;border:1px solid #adadad"></div>
<div class="a" style="left:1217px;top:753px;width:60px;height:34px;background:#fff;border:1px solid #7a7a7a"></div>
<svg class="a" style="left:1002px;top:319px" width="366" height="524">
<g transform="translate(-1002 -319)">
<!-- title icon -->
<path d="M1014.5 329 L1016 328 L1030 328 L1031 329.5 L1031 347.8 L1015.5 347.8 L1013.4 345.5 Z" fill="#dcaa08"/>
<path d="M1013.4 329.5 L1015.5 328.5 L1015.5 347.8 L1013.4 345.5 Z" fill="#f0c840"/>
<rect x="1015.5" y="342.2" width="15.6" height="5.6" fill="#6e5410"/>
<text x="1018.6" y="339" font-size="11.5" font-weight="bold" fill="#fff">P</text>
<text x="1019" y="346.6" font-size="3.8" fill="#c8b070">SHP</text>
<text x="1037.4" y="344.5" font-size="15.5" fill="#9a9a9a" textLength="213.6" lengthAdjust="spacingAndGlyphs">Noyau solide depuis la sélection</text>
<path d="M1340.2 332 L1351.7 343.7 M1351.7 332 L1340.2 343.7" stroke="#6a6a6a" stroke-width="1"/>
<text x="1019" y="381" font-size="12.6" fill="#000" textLength="45.5" lengthAdjust="spacingAndGlyphs">Principal</text>
<text x="1077" y="382.5" font-size="12.6" fill="#000" textLength="39" lengthAdjust="spacingAndGlyphs">Avancé</text>
<rect x="1029.5" y="403.5" width="23" height="23" fill="#d6e8f8" stroke="#0c4c98" stroke-width="1.1"/>
<rect x="1033" y="407" width="16" height="16" fill="#cfe2f6" stroke="#3a94a4" stroke-width="2"/>
<text x="1067" y="421" font-size="12.6" fill="#000" textLength="34" lengthAdjust="spacingAndGlyphs">Forme</text>
<rect x="1035" y="448" width="68" height="12" fill="#fff"/>
<text x="1038" y="459" font-size="12.6" fill="#000" textLength="61.6" lengthAdjust="spacingAndGlyphs">Dimensions</text>
<text x="1073" y="489" font-size="12.6" fill="#000" textLength="31.5" lengthAdjust="spacingAndGlyphs">Perso.</text>
<path d="M1284 481.5 L1288.5 486 L1293 481.5" fill="none" stroke="#333" stroke-width="1"/>
<text x="1043" y="531" font-size="12.6" fill="#000" textLength="51.5" lengthAdjust="spacingAndGlyphs">Longueur</text>
<text x="1043" y="565" font-size="12.6" fill="#000" textLength="40.5" lengthAdjust="spacingAndGlyphs">Largeur</text>
<text x="1043" y="599" font-size="12.6" fill="#000" textLength="43.5" lengthAdjust="spacingAndGlyphs">Hauteur</text>
<text x="1043" y="641" font-size="12.6" fill="#000" textLength="77.5" lengthAdjust="spacingAndGlyphs">Sur-dimension</text>
<text x="1151" y="528" font-size="12" fill="#000">2</text>
<text x="1151" y="562" font-size="12" fill="#000">8</text>
<text x="1151" y="596" font-size="12" fill="#000" textLength="12.5" lengthAdjust="spacingAndGlyphs">34</text>
<rect x="1293.5" y="621.5" width="23" height="23" fill="#cce4f7" stroke="#1060b0" stroke-width="1.2"/>
<rect x="1294.5" y="628.5" width="19.5" height="6.5" fill="#d8d8d8" stroke="#111" stroke-width="1"/>
<path d="M1297 630 V633 M1300 630 V633 M1303 630 V633 M1306 630 V633 M1309 630 V633" stroke="#555" stroke-width="1"/>
<rect x="1043.5" y="667.5" width="15" height="15" fill="#fff" stroke="#333" stroke-width="1"/>
<path d="M1046 675 L1049.5 679 L1056 671" fill="none" stroke="#333" stroke-width="1.2"/>
<text x="1062" y="679" font-size="12.6" fill="#000" textLength="88.5" lengthAdjust="spacingAndGlyphs">Valeurs arrondies</text>
<rect x="1293.5" y="677.5" width="23" height="23" fill="#cce4f7" stroke="#1060b0" stroke-width="1.2"/>
<path d="M1304.5 678.5 L1299 684 H1302.5 V686 H1306.5 V684 H1310 Z M1304.5 698.5 L1299 693 H1302.5 V690 H1306.5 V693 H1310 Z" fill="#30d030" stroke="#108010" stroke-width="0.6"/>
<rect x="1294.5" y="685.5" width="19.5" height="4.5" fill="#8cc4d4" stroke="#000" stroke-width="1"/>
<text x="1049" y="710" font-size="12" fill="#000">1</text>
<rect x="1091.5" y="759.5" width="15" height="15" fill="#fff" stroke="#333" stroke-width="1"/>
<path d="M1094 767 L1097.5 771 L1104 763" fill="none" stroke="#333" stroke-width="1.2"/>
<text x="1110" y="771" font-size="12.6" fill="#000" textLength="56" lengthAdjust="spacingAndGlyphs">Booléenne</text>
<rect x="1220.2" y="756.2" width="32.6" height="27.4" fill="#f0f0f0"/>
<rect x="1224.5" y="758.2" width="15.6" height="1.8" fill="#999"/>
<rect x="1230.8" y="765.8" width="14.6" height="15.4" fill="#f4f4f4" stroke="#000" stroke-width="1.3"/>
<rect x="1224.8" y="760.6" width="14.8" height="14.6" fill="#8edcf0" stroke="#000" stroke-width="1.3"/>
<rect x="1230.8" y="765.8" width="9" height="9.6" fill="#eeeaea" stroke="#2a8caa" stroke-width="1.2"/>
<path d="M1262 768 L1266.4 772.6 L1270.8 768" fill="none" stroke="#333" stroke-width="1"/>
<text x="1072" y="815" font-size="12.6" fill="#000" textLength="14.5" lengthAdjust="spacingAndGlyphs">OK</text>
<text x="1164" y="815" font-size="12.6" fill="#000" textLength="42" lengthAdjust="spacingAndGlyphs">Annuler</text>
<text x="1279" y="815" font-size="12.6" fill="#000" textLength="24" lengthAdjust="spacingAndGlyphs">Aide</text>
</g>
</svg>
<!-- status bar -->
<svg class="a" style="left:0;top:1076px" width="1505" height="42">
<g transform="translate(0 -1076)">
<path d="M16 1087 L24 1095 M24 1087 L16 1095" stroke="#111" stroke-width="1.5"/>
<rect x="43.5" y="1086.5" width="16" height="3" fill="#bbb" stroke="#777" stroke-width="0.8"/>
<rect x="43.5" y="1090" width="16" height="4" fill="#3a8ad8" stroke="#555" stroke-width="0.8"/>
<rect x="43.5" y="1094.5" width="16" height="3" fill="#bbb" stroke="#777" stroke-width="0.8"/>
<rect x="67.5" y="1082.5" width="27" height="18" fill="#cce4f7" stroke="#99c9ef" stroke-width="1"/>
<rect x="97.5" y="1082.5" width="27" height="18" fill="#cce4f7" stroke="#99c9ef" stroke-width="1"/>
<rect x="187.5" y="1082.5" width="27" height="18" fill="#cce4f7" stroke="#99c9ef" stroke-width="1"/>
<text x="77.5" y="1096" font-size="12.5" fill="#222">0</text>
<text x="107.5" y="1096" font-size="12.5" fill="#222">1</text>
<text x="137.5" y="1096" font-size="12.5" fill="#222">2</text>
<text x="167.5" y="1096" font-size="12.5" fill="#222">3</text>
<text x="197.5" y="1096" font-size="12.5" fill="#222">4</text>
<rect x="377" y="1115" width="23" height="3" fill="#9cc8f0"/>
<rect x="484.5" y="1115.5" width="63" height="5" fill="none" stroke="#bbb"/>
<rect x="552.5" y="1115.5" width="75" height="5" fill="none" stroke="#888"/>
<rect x="630.5" y="1115.5" width="75" height="5" fill="none" stroke="#888"/>
<rect x="710.5" y="1115.5" width="75" height="5" fill="none" stroke="#888"/>
<rect x="894.5" y="1115.5" width="57" height="5" fill="none" stroke="#bbb"/>
<rect x="955" y="1115" width="550" height="3" fill="#fff"/>
</g>
</svg>

</body></html>
